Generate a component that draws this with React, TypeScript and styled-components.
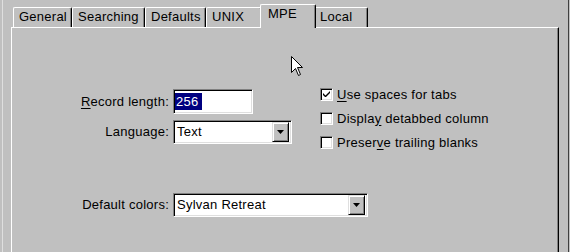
import React from "react";
import styled, { createGlobalStyle } from "styled-components";

const Global = createGlobalStyle`
  html, body { margin: 0; padding: 0; background: #c0c0c0; }
  body { font-family: "Liberation Sans", Arial, sans-serif; font-size: 13px; letter-spacing: 0.25px; color: #000; }
`;

const Root = styled.div`
  position: relative;
  width: 570px;
  height: 252px;
  overflow: hidden;
  box-sizing: border-box;
  padding: 0 1px 0 2px;
  background: #c0c0c0;
`;

const Frame = styled.div`
  height: 100%;
  box-sizing: border-box;
  border-left: 1px solid #dfdfdf;
  border-right: 1px solid #404040;
  padding: 4px 9px 0 8px;
  display: flex;
  flex-direction: column;
`;

const TabStrip = styled.div`
  display: flex;
  align-items: flex-end;
  height: 23px;
  padding-left: 2px;
`;

const Tab = styled.div<{ $active?: boolean; $w: number }>`
  position: relative;
  z-index: ${(p) => (p.$active ? 2 : 1)};
  box-sizing: border-box;
  width: ${(p) => p.$w + (p.$active ? 4 : 0)}px;
  height: ${(p) => (p.$active ? 24 : 20)}px;
  margin: 0 ${(p) => (p.$active ? -2 : 0)}px ${(p) => (p.$active ? -1 : 0)}px;
  padding: 1px 0 0 ${(p) => (p.$active ? 7 : 5)}px;
  background: #c0c0c0;
  border-left: 1px solid #fff;
  border-top: 1px solid #fff;
  border-right: 1px solid #000;
  border-top-left-radius: 2px;
  border-top-right-radius: 2px;
  box-shadow: inset -1px 0 0 #808080;
  line-height: 16px;
  white-space: nowrap;
`;

const Panel = styled.div`
  flex: 1;
  box-sizing: border-box;
  border-top: 1px solid #fff;
  border-left: 1px solid #fff;
  border-right: 1px solid #000;
  box-shadow: inset -1px 0 0 #808080;
  padding-top: 54px;
`;

const Body = styled.div`
  display: flex;
  align-items: flex-start;
`;

const LeftCol = styled.div`
  width: 280px;
  padding-top: 7px;
  display: flex;
  flex-direction: column;
`;

const FieldRow = styled.div<{ $gap: number }>`
  display: grid;
  grid-template-columns: 157px auto;
  column-gap: 4px;
  align-items: center;
  margin-top: ${(p) => p.$gap}px;
  justify-content: start;
`;

const Label = styled.label`
  text-align: right;
  white-space: nowrap;
  line-height: 16px;
`;

const U = styled.span`
  text-decoration: underline;
  text-underline-offset: 2px;
`;

const Sunken = styled.div<{ $w: number; $h: number }>`
  box-sizing: border-box;
  width: ${(p) => p.$w}px;
  height: ${(p) => p.$h}px;
  border-top: 1px solid #808080;
  border-left: 1px solid #808080;
  border-right: 1px solid #fff;
  border-bottom: 1px solid #fff;
  box-shadow: inset 1px 1px 0 #000, inset -1px -1px 0 #dfdfdf;
  background: #fff;
  display: flex;
  align-items: center;
  padding: 0 2px 0 3px;
`;

const Selected = styled.span`
  background: #000080;
  color: #fff;
  line-height: 17px;
  padding: 0 4px 0 1px;
  margin-left: -2px;
`;

const SelectText = styled.span`
  flex: 1;
  line-height: 16px;
`;

const DropButton = styled.div`
  box-sizing: border-box;
  width: 17px;
  height: 20px;
  background: #c0c0c0;
  border-top: 1px solid #dfdfdf;
  border-left: 1px solid #dfdfdf;
  border-right: 1px solid #000;
  border-bottom: 1px solid #000;
  box-shadow: inset 1px 1px 0 #fff, inset -1px -1px 0 #808080;
  display: flex;
  align-items: center;
  justify-content: center;
`;

const RightCol = styled.div`
  margin-left: 28px;
  display: flex;
  flex-direction: column;
`;

const CheckRow = styled.div`
  display: flex;
  align-items: center;
  height: 24px;
  gap: 4px;
  white-space: nowrap;
`;

const Box = styled.div`
  box-sizing: border-box;
  width: 13px;
  height: 13px;
  background: #fff;
  border-top: 1px solid #808080;
  border-left: 1px solid #808080;
  border-right: 1px solid #fff;
  border-bottom: 1px solid #fff;
  box-shadow: inset 1px 1px 0 #000, inset -1px -1px 0 #dfdfdf;
  display: flex;
  align-items: center;
  justify-content: center;
`;

const Cursor = styled.svg`
  position: absolute;
  left: 291px;
  top: 56px;
`;

const Arrow = () => (
  <svg width="7" height="4" viewBox="0 0 7 4">
    <path d="M0 0H7L3.5 4Z" fill="#000" />
  </svg>
);

const Select = ({ w, value }: { w: number; value: string }) => (
  <Sunken $w={w} $h={24}>
    <SelectText>{value}</SelectText>
    <DropButton>
      <Arrow />
    </DropButton>
  </Sunken>
);

const Check = ({ checked, children }: { checked?: boolean; children: React.ReactNode }) => (
  <CheckRow>
    <Box>
      {checked && (
        <svg width="7" height="7" viewBox="0 0 7 7">
          <path d="M0 2L0 4L2 6L3 6L7 2L7 0L2.5 4.5Z" fill="#000" />
        </svg>
      )}
    </Box>
    <span>{children}</span>
  </CheckRow>
);

const tabs: { label: string; w: number; active?: boolean }[] = [
  { label: "General", w: 59 },
  { label: "Searching", w: 73 },
  { label: "Defaults", w: 61 },
  { label: "UNIX", w: 56 },
  { label: "MPE", w: 52, active: true },
  { label: "Local", w: 54 },
];

export default function App() {
  return (
    <Root>
      <Global />
      <Frame>
        <TabStrip>
          {tabs.map((t) => (
            <Tab key={t.label} $w={t.w} $active={t.active}>
              {t.label}
            </Tab>
          ))}
        </TabStrip>
        <Panel>
          <Body>
            <LeftCol>
              <FieldRow $gap={0}>
                <Label>
                  <U>R</U>ecord length:
                </Label>
                <Sunken $w={80} $h={25}>
                  <Selected>256</Selected>
                </Sunken>
              </FieldRow>
              <FieldRow $gap={6}>
                <Label>Language:</Label>
                <Select w={119} value="Text" />
              </FieldRow>
              <FieldRow $gap={49}>
                <Label>Default colors:</Label>
                <Select w={195} value="Sylvan Retreat" />
              </FieldRow>
            </LeftCol>
            <RightCol>
              <Check checked>
                <U>U</U>se spaces for tabs
              </Check>
              <Check>
                Displa<U>y</U> detabbed column
              </Check>
              <Check>
                Preser<U>v</U>e trailing blanks
              </Check>
            </RightCol>
          </Body>
        </Panel>
      </Frame>
      <Cursor width="13" height="21" viewBox="0 0 13 21">
        <path
          d="M0.5 0.5V16.5L4.5 12.5L7.5 19.5L9.5 18.5L6.5 11.5H11.5Z"
          fill="#fff"
          stroke="#000"
          strokeWidth="1"
        />
      </Cursor>
    </Root>
  );
}
